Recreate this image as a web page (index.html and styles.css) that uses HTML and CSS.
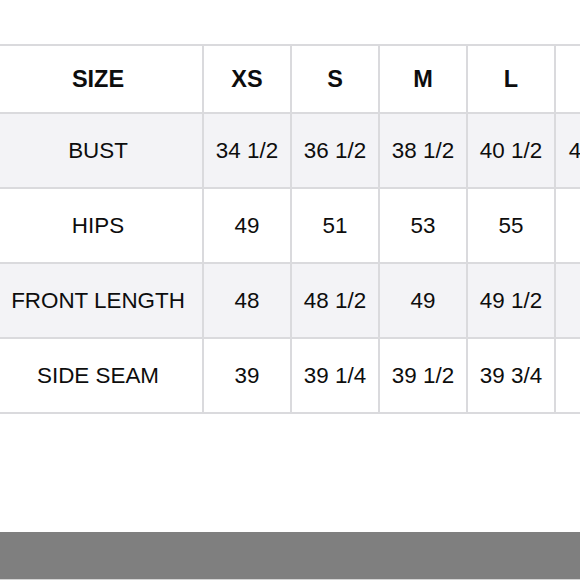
FILE: index.html
```html
<!DOCTYPE html>
<html>
<head>
<meta charset="utf-8">
<link rel="stylesheet" href="styles.css">
</head>
<body>
<div class="page">
  <div class="chart">
    <div class="cell head">SIZE</div>
    <div class="cell head">XS</div>
    <div class="cell head">S</div>
    <div class="cell head">M</div>
    <div class="cell head">L</div>
    <div class="cell head">XL</div>

    <div class="cell alt">BUST</div>
    <div class="cell alt">34 1/2</div>
    <div class="cell alt">36 1/2</div>
    <div class="cell alt">38 1/2</div>
    <div class="cell alt">40 1/2</div>
    <div class="cell alt">42 1/2</div>

    <div class="cell">HIPS</div>
    <div class="cell">49</div>
    <div class="cell">51</div>
    <div class="cell">53</div>
    <div class="cell">55</div>
    <div class="cell">57</div>

    <div class="cell alt">FRONT LENGTH</div>
    <div class="cell alt">48</div>
    <div class="cell alt">48 1/2</div>
    <div class="cell alt">49</div>
    <div class="cell alt">49 1/2</div>
    <div class="cell alt">50</div>

    <div class="cell">SIDE SEAM</div>
    <div class="cell">39</div>
    <div class="cell">39 1/4</div>
    <div class="cell">39 1/2</div>
    <div class="cell">39 3/4</div>
    <div class="cell">40</div>
  </div>
  <div class="spacer"></div>
  <div class="bar"></div>
</div>
</body>
</html>
```

FILE: styles.css
```css
html, body {
  margin: 0;
  padding: 0;
  background: #ffffff;
}
.page {
  width: 580px;
  height: 580px;
  overflow: hidden;
  display: flex;
  flex-direction: column;
  padding-top: 44px;
  box-sizing: border-box;
  font-family: "Liberation Sans", Arial, sans-serif;
  color: #0d0d0d;
}
.chart {
  display: grid;
  grid-template-columns: 208px 86px 86px 86px 86px 88px;
  grid-template-rows: 66px 73px 73px 73px 73px;
  gap: 2px;
  padding: 2px 0;
  margin-left: -6px;
  background: #dadadd;
  width: 646px;
}
.cell {
  background: #ffffff;
  display: flex;
  align-items: center;
  justify-content: center;
  font-size: 22.4px;
  white-space: nowrap;
}
.cell.alt {
  background: #f3f3f6;
}
.cell.head {
  font-weight: bold;
  font-size: 23.5px;
}
.spacer {
  height: 118px;
  flex: none;
}
.bar {
  height: 47px;
  flex: none;
  background: #7f7f7f;
  border-bottom: 1px solid #d4d4d4;
}
```
